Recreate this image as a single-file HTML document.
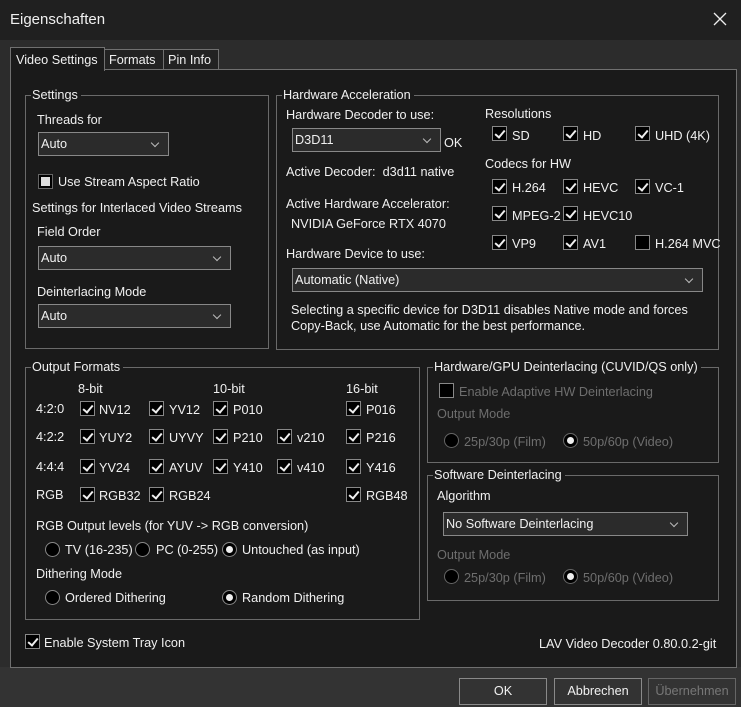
<!DOCTYPE html><html><head><style>
*{box-sizing:border-box;margin:0;padding:0}
body{width:741px;height:707px;background:#333;font-family:"Liberation Sans",sans-serif;font-size:12.7px;color:#f0f0f0;position:relative;overflow:hidden}
.a{position:absolute;white-space:nowrap;line-height:16px}
.g{color:#6e6e6e}
.box{position:absolute;border:1px solid #6a6a6a}
.lg{position:absolute;background:#1a1a1a;padding:0 3px 0 1px;line-height:16px;white-space:nowrap}
.cb{position:absolute;width:15px;height:15px;border:1px solid #888;background:#000}
.cb.c::after{content:"";position:absolute;left:4px;top:1px;width:4px;height:8px;border:solid #eee;border-width:0 2.5px 2.5px 0;transform:rotate(40deg)}
.rd{position:absolute;width:15px;height:15px;border:1px solid #888;border-radius:50%;background:#000}
.rd.c::after{content:"";position:absolute;left:3px;top:3px;width:7px;height:7px;border-radius:50%;background:#eee}
.sel{position:absolute;border:1px solid #888;background:#2b2b2b;height:24px;line-height:22px;padding-left:2px}
.sel::after{content:"";position:absolute;right:10px;top:7px;width:5px;height:5px;border:solid #bbb;border-width:0 1px 1px 0;transform:rotate(45deg)}
.btn{position:absolute;border:1px solid #8a8a8a;background:#333;height:27px;line-height:25px;text-align:center}
</style></head><body>
<div style="position:absolute;left:0;top:0;width:741px;height:40px;background:#202020"></div>
<div class="a" style="left:10px;top:12px;font-size:15px">Eigenschaften</div>
<svg style="position:absolute;left:713px;top:12px" width="14" height="14"><path d="M1 1L13 13M13 1L1 13" stroke="#eee" stroke-width="1.3"/></svg>
<div style="position:absolute;left:0;top:40px;width:741px;height:627px;background:#2c2c2c"></div>
<div style="position:absolute;left:10px;top:69px;width:727px;height:599px;background:#1a1a1a;border:1px solid #707070"></div>
<div style="position:absolute;left:10px;top:47px;width:95px;height:24px;background:#1a1a1a;border:1px solid #707070;border-bottom:none"></div>
<div style="position:absolute;left:104px;top:49px;width:60px;height:21px;background:#222;border:1px solid #707070"></div>
<div style="position:absolute;left:163px;top:49px;width:56px;height:21px;background:#222;border:1px solid #707070"></div>
<div class="a" style="left:16px;top:52px">Video Settings</div>
<div class="a" style="left:109px;top:52px">Formats</div>
<div class="a" style="left:168px;top:52px">Pin Info</div>

<div class="box" style="left:25px;top:95px;width:244px;height:254px"></div><div class="lg" style="left:31px;top:87px">Settings</div>
<div class="a" style="left:37px;top:112px">Threads for</div>
<div class="sel" style="left:38px;top:132px;width:131px">Auto</div>
<div class="cb" style="left:38px;top:174px;background:#ddd;border-color:#666;box-shadow:inset 0 0 0 2px #000"></div>
<div class="a" style="left:58px;top:174px">Use Stream Aspect Ratio</div>
<div class="a" style="left:32px;top:200px">Settings for Interlaced Video Streams</div>
<div class="a" style="left:37px;top:224px">Field Order</div>
<div class="sel" style="left:38px;top:246px;width:193px">Auto</div>
<div class="a" style="left:37px;top:284px">Deinterlacing Mode</div>
<div class="sel" style="left:38px;top:304px;width:193px">Auto</div>

<div class="box" style="left:276px;top:95px;width:443px;height:255px"></div><div class="lg" style="left:282px;top:87px">Hardware Acceleration</div>
<div class="a" style="left:286px;top:107px">Hardware Decoder to use:</div>
<div class="sel" style="left:292px;top:128px;width:149px">D3D11</div>
<div class="a" style="left:444px;top:135px">OK</div>
<div class="a" style="left:286px;top:164px">Active Decoder:&nbsp; d3d11 native</div>
<div class="a" style="left:286px;top:196px">Active Hardware Accelerator:</div>
<div class="a" style="left:291px;top:216px">NVIDIA GeForce RTX 4070</div>
<div class="a" style="left:286px;top:246px">Hardware Device to use:</div>
<div class="sel" style="left:292px;top:268px;width:411px">Automatic (Native)</div>
<div class="a" style="left:291px;top:302px">Selecting a specific device for D3D11 disables Native mode and forces</div>
<div class="a" style="left:291px;top:318px">Copy-Back, use Automatic for the best performance.</div>
<div class="a" style="left:485px;top:106px">Resolutions</div>
<div class="cb c" style="left:492px;top:126px"></div><div class="a" style="left:512px;top:128px">SD</div>
<div class="cb c" style="left:563px;top:126px"></div><div class="a" style="left:583px;top:128px">HD</div>
<div class="cb c" style="left:635px;top:126px"></div><div class="a" style="left:655px;top:128px">UHD (4K)</div>
<div class="a" style="left:485px;top:156px">Codecs for HW</div>
<div class="cb c" style="left:492px;top:179px"></div><div class="a" style="left:512px;top:180px">H.264</div>
<div class="cb c" style="left:563px;top:179px"></div><div class="a" style="left:583px;top:180px">HEVC</div>
<div class="cb c" style="left:635px;top:179px"></div><div class="a" style="left:655px;top:180px">VC-1</div>
<div class="cb c" style="left:492px;top:206px"></div><div class="a" style="left:512px;top:208px">MPEG-2</div>
<div class="cb c" style="left:563px;top:206px"></div><div class="a" style="left:583px;top:208px">HEVC10</div>
<div class="cb c" style="left:492px;top:235px"></div><div class="a" style="left:512px;top:236px">VP9</div>
<div class="cb c" style="left:563px;top:235px"></div><div class="a" style="left:583px;top:236px">AV1</div>
<div class="cb" style="left:635px;top:235px"></div><div class="a" style="left:655px;top:236px">H.264 MVC</div>

<div class="box" style="left:25px;top:367px;width:395px;height:253px"></div><div class="lg" style="left:31px;top:359px">Output Formats</div>
<div class="a" style="left:78px;top:381px">8-bit</div><div class="a" style="left:213px;top:381px">10-bit</div><div class="a" style="left:346px;top:381px">16-bit</div>
<div class="a" style="left:36px;top:401px">4:2:0</div><div class="a" style="left:36px;top:429px">4:2:2</div><div class="a" style="left:36px;top:459px">4:4:4</div><div class="a" style="left:36px;top:487px">RGB</div>
<div class="cb c" style="left:80px;top:401px"></div><div class="a" style="left:99px;top:402px">NV12</div>
<div class="cb c" style="left:149px;top:401px"></div><div class="a" style="left:169px;top:402px">YV12</div>
<div class="cb c" style="left:213px;top:401px"></div><div class="a" style="left:233px;top:402px">P010</div>
<div class="cb c" style="left:346px;top:401px"></div><div class="a" style="left:366px;top:402px">P016</div>
<div class="cb c" style="left:80px;top:429px"></div><div class="a" style="left:99px;top:430px">YUY2</div>
<div class="cb c" style="left:149px;top:429px"></div><div class="a" style="left:169px;top:430px">UYVY</div>
<div class="cb c" style="left:213px;top:429px"></div><div class="a" style="left:233px;top:430px">P210</div>
<div class="cb c" style="left:277px;top:429px"></div><div class="a" style="left:297px;top:430px">v210</div>
<div class="cb c" style="left:346px;top:429px"></div><div class="a" style="left:366px;top:430px">P216</div>
<div class="cb c" style="left:80px;top:459px"></div><div class="a" style="left:99px;top:460px">YV24</div>
<div class="cb c" style="left:149px;top:459px"></div><div class="a" style="left:169px;top:460px">AYUV</div>
<div class="cb c" style="left:213px;top:459px"></div><div class="a" style="left:233px;top:460px">Y410</div>
<div class="cb c" style="left:277px;top:459px"></div><div class="a" style="left:297px;top:460px">v410</div>
<div class="cb c" style="left:346px;top:459px"></div><div class="a" style="left:366px;top:460px">Y416</div>
<div class="cb c" style="left:80px;top:487px"></div><div class="a" style="left:99px;top:488px">RGB32</div>
<div class="cb c" style="left:149px;top:487px"></div><div class="a" style="left:169px;top:488px">RGB24</div>
<div class="cb c" style="left:346px;top:487px"></div><div class="a" style="left:366px;top:488px">RGB48</div>
<div class="a" style="left:36px;top:518px">RGB Output levels (for YUV -&gt; RGB conversion)</div>
<div class="rd" style="left:45px;top:542px"></div><div class="a" style="left:65px;top:542px">TV (16-235)</div>
<div class="rd" style="left:135px;top:542px"></div><div class="a" style="left:156px;top:542px">PC (0-255)</div>
<div class="rd c" style="left:222px;top:542px"></div><div class="a" style="left:242px;top:542px">Untouched (as input)</div>
<div class="a" style="left:36px;top:566px">Dithering Mode</div>
<div class="rd" style="left:45px;top:590px"></div><div class="a" style="left:65px;top:590px">Ordered Dithering</div>
<div class="rd c" style="left:222px;top:590px"></div><div class="a" style="left:242px;top:590px">Random Dithering</div>

<div class="box" style="left:427px;top:367px;width:292px;height:96px"></div><div class="lg" style="left:433px;top:359px">Hardware/GPU Deinterlacing (CUVID/QS only)</div>
<div class="cb" style="left:439px;top:383px"></div><div class="a g" style="left:459px;top:384px">Enable Adaptive HW Deinterlacing</div>
<div class="a g" style="left:437px;top:406px">Output Mode</div>
<div class="rd" style="left:444px;top:433px;border-color:#666"></div><div class="a g" style="left:464px;top:434px">25p/30p (Film)</div>
<div class="rd c" style="left:563px;top:433px;border-color:#666"></div><div class="a g" style="left:583px;top:434px">50p/60p (Video)</div>

<div class="box" style="left:427px;top:475px;width:292px;height:126px"></div><div class="lg" style="left:433px;top:467px">Software Deinterlacing</div>
<div class="a" style="left:437px;top:488px">Algorithm</div>
<div class="sel" style="left:443px;top:512px;width:245px">No Software Deinterlacing</div>
<div class="a g" style="left:437px;top:547px">Output Mode</div>
<div class="rd" style="left:444px;top:569px;border-color:#666"></div><div class="a g" style="left:464px;top:570px">25p/30p (Film)</div>
<div class="rd c" style="left:563px;top:569px;border-color:#666"></div><div class="a g" style="left:583px;top:570px">50p/60p (Video)</div>

<div class="cb c" style="left:25px;top:634px"></div><div class="a" style="left:44px;top:635px">Enable System Tray Icon</div>
<div class="a" style="left:539px;top:636px">LAV Video Decoder 0.80.0.2-git</div>

<div class="btn" style="left:459px;top:678px;width:88px">OK</div>
<div class="btn" style="left:554px;top:678px;width:88px">Abbrechen</div>
<div class="btn" style="left:648px;top:678px;width:88px;color:#777;border-color:#666">Übernehmen</div>
</body></html>
